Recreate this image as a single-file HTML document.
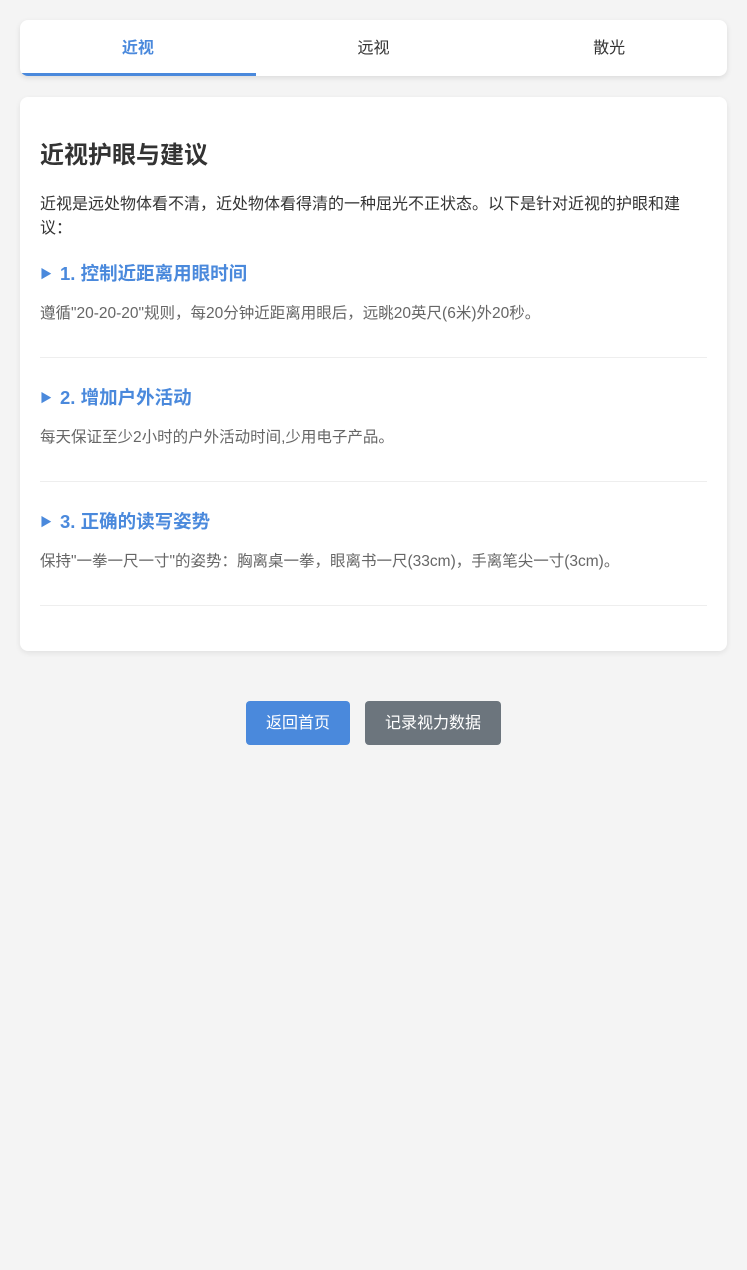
<!DOCTYPE html>
<html><head><meta charset="utf-8"><style>
*{margin:0;padding:0;box-sizing:border-box}
body{width:747px;height:1270px;background:#f4f4f4;font-family:"Liberation Sans","Noto Sans CJK SC",sans-serif;position:relative;overflow:hidden}
.tabs{position:absolute;left:20px;top:20px;width:707px;height:56px;background:#fff;border-radius:8px;box-shadow:0 2px 6px rgba(0,0,0,.1);display:flex;overflow:hidden}
.tab{flex:1;text-align:center;line-height:58px;font-size:16px;color:#333;position:relative}
.tab.a{color:#4a89dc;font-weight:bold}
.tab.a:after{content:"";position:absolute;left:0;right:0;bottom:0;height:3px;background:#4a89dc}
.card{position:absolute;left:20px;top:97px;width:707px;height:554px;background:#fff;border-radius:8px;box-shadow:0 2px 6px rgba(0,0,0,.08)}
h1{position:absolute;left:20px;top:44px;font-size:24px;color:#333;font-weight:bold;line-height:30px}
.intro{position:absolute;left:20px;top:96px;width:655px;font-size:16px;line-height:24px;color:#333}
.sec{position:absolute;left:20px;width:667px;border-bottom:1px solid #eee}
.sec h3{font-size:18.5px;color:#4a89dc;font-weight:bold;line-height:26px}
.sec h3 span{font-size:12px;margin-right:8px;vertical-align:2px}
.sec p{font-size:15.5px;color:#666;line-height:22px;margin-top:16px}
.btn{position:absolute;top:701px;height:44px;line-height:46px;border-radius:4px;color:#fff;font-size:16px;text-align:center}
</style></head><body>
<div class="tabs"><div class="tab a">近视</div><div class="tab">远视</div><div class="tab">散光</div></div>
<div class="card">
<h1>近视护眼与建议</h1>
<div class="intro">近视是远处物体看不清，近处物体看得清的一种屈光不正状态。以下是针对近视的护眼和建议：</div>
<div class="sec" style="top:164px;height:97px"><h3><span>▶</span>1. 控制近距离用眼时间</h3><p>遵循"20-20-20"规则，每20分钟近距离用眼后，远眺20英尺(6米)外20秒。</p></div>
<div class="sec" style="top:288px;height:97px"><h3><span>▶</span>2. 增加户外活动</h3><p>每天保证至少2小时的户外活动时间,少用电子产品。</p></div>
<div class="sec" style="top:412px;height:97px"><h3><span>▶</span>3. 正确的读写姿势</h3><p>保持"一拳一尺一寸"的姿势：胸离桌一拳，眼离书一尺(33cm)，手离笔尖一寸(3cm)。</p></div>
</div>
<div class="btn" style="left:246px;width:104px;background:#4a89dc">返回首页</div>
<div class="btn" style="left:365px;width:136px;background:#6c757d">记录视力数据</div>
</body></html>
